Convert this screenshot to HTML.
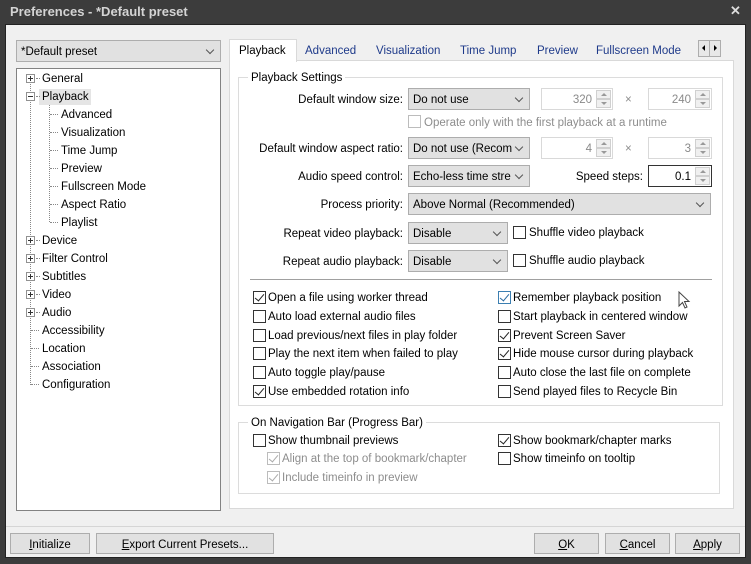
<!DOCTYPE html>
<html><head><meta charset="utf-8"><style>
*{box-sizing:border-box;margin:0;padding:0}
body{width:751px;height:564px;background:#3c3c3c;font-family:"Liberation Sans",sans-serif;font-size:11.5px;color:#000;position:relative;overflow:hidden}
.a{position:absolute;white-space:nowrap}
.win{position:absolute;left:5px;top:24px;width:741px;height:534px;background:#f0f0f0;border:1px solid #222}
.t{position:absolute;white-space:nowrap;line-height:14px;margin-top:1px}
.combo{position:absolute;background:#e1e1e1;border:1px solid #adadad;height:22px;padding:4px 4px 2px;line-height:14px;white-space:nowrap;overflow:hidden}
.combo:after{content:"";position:absolute;right:7px;top:6px;width:5px;height:5px;border-right:1px solid #555;border-bottom:1px solid #555;transform:rotate(45deg)}
.spin{position:absolute;background:#fff;border:1px solid #d9d9d9;height:22px;color:#8a8a8a;text-align:right;padding:4px 20px 0 0;line-height:14px}
.spin i{position:absolute;right:1px;width:15px;height:9px;background:#f0f0f0;border:1px solid #d0d0d0}
.spin i.u{top:1px}.spin i.d{top:10px}
.spin i:after{content:"";position:absolute;left:4px;border-left:3px solid transparent;border-right:3px solid transparent}
.spin i.u:after{top:2px;border-bottom:3px solid #999}
.spin i.d:after{top:2px;border-top:3px solid #999}
.cb{position:absolute;width:13px;height:13px;border:1px solid #333;background:#fff}
.cb.on:after{content:"";position:absolute;left:3px;top:0px;width:4px;height:8px;border-right:1.5px solid #222;border-bottom:1.5px solid #222;transform:rotate(40deg)}
.cb.dis{border-color:#bcbcbc}
.cb.dis:after{border-color:#aaa!important}
.cb.blue{border-color:#3c7fb1}
.cb.blue:after{border-color:#2a6aa0!important}
.btn{position:absolute;height:21px;border:1px solid #adadad;background:#e1e1e1;text-align:center;line-height:20px;padding-top:1px}
.btn u{text-decoration:underline}
.pm{position:absolute;width:9px;height:9px;border:1px solid #919191;background:#fff}
.pm:before{content:"";position:absolute;left:1px;top:3px;width:5px;height:1px;background:#333}
.pm.p:after{content:"";position:absolute;left:3px;top:1px;width:1px;height:5px;background:#333}
.dv{position:absolute;border-left:1px dotted #888}
.dh{position:absolute;border-top:1px dotted #888}
.grp{position:absolute;border:1px solid #dcdcdc}
.lbl{position:absolute;text-align:right;line-height:14px;white-space:nowrap;margin-top:1px}
.gray{color:#8d8d8d}
</style></head><body>
<div class="a" style="left:10px;top:4px;color:#d4d4d4;font-weight:bold;font-size:13px">Preferences - *Default preset</div>
<div class="a" style="left:730px;top:3px;color:#ddd;font-weight:bold;font-size:13px">✕</div>
<div class="win"></div>
<div class="combo" style="left:16px;top:40px;width:205px">*Default preset</div>
<div class="a" style="left:16px;top:68px;width:205px;height:443px;background:#fff;border:1px solid #828282"></div>
<div class="dv" style="left:30px;top:80px;height:305px"></div>
<div class="dv" style="left:49px;top:104px;height:118px"></div>
<div class="a" style="left:39px;top:89px;width:52px;height:16px;background:#e5e5e5"></div>
<div class="pm p" style="left:26px;top:74px"></div><div class="dh" style="left:36px;top:78px;width:4px"></div><div class="t" style="left:42px;top:71px">General</div>
<div class="pm" style="left:26px;top:92px"></div><div class="dh" style="left:36px;top:96px;width:4px"></div><div class="t" style="left:42px;top:89px">Playback</div>
<div class="dh" style="left:50px;top:114px;width:8px"></div><div class="t" style="left:61px;top:107px">Advanced</div>
<div class="dh" style="left:50px;top:132px;width:8px"></div><div class="t" style="left:61px;top:125px">Visualization</div>
<div class="dh" style="left:50px;top:150px;width:8px"></div><div class="t" style="left:61px;top:143px">Time Jump</div>
<div class="dh" style="left:50px;top:168px;width:8px"></div><div class="t" style="left:61px;top:161px">Preview</div>
<div class="dh" style="left:50px;top:186px;width:8px"></div><div class="t" style="left:61px;top:179px">Fullscreen Mode</div>
<div class="dh" style="left:50px;top:204px;width:8px"></div><div class="t" style="left:61px;top:197px">Aspect Ratio</div>
<div class="dh" style="left:50px;top:222px;width:8px"></div><div class="t" style="left:61px;top:215px">Playlist</div>
<div class="pm p" style="left:26px;top:236px"></div><div class="dh" style="left:36px;top:240px;width:4px"></div><div class="t" style="left:42px;top:233px">Device</div>
<div class="pm p" style="left:26px;top:254px"></div><div class="dh" style="left:36px;top:258px;width:4px"></div><div class="t" style="left:42px;top:251px">Filter Control</div>
<div class="pm p" style="left:26px;top:272px"></div><div class="dh" style="left:36px;top:276px;width:4px"></div><div class="t" style="left:42px;top:269px">Subtitles</div>
<div class="pm p" style="left:26px;top:290px"></div><div class="dh" style="left:36px;top:294px;width:4px"></div><div class="t" style="left:42px;top:287px">Video</div>
<div class="pm p" style="left:26px;top:308px"></div><div class="dh" style="left:36px;top:312px;width:4px"></div><div class="t" style="left:42px;top:305px">Audio</div>
<div class="dh" style="left:31px;top:330px;width:8px"></div><div class="t" style="left:42px;top:323px">Accessibility</div>
<div class="dh" style="left:31px;top:348px;width:8px"></div><div class="t" style="left:42px;top:341px">Location</div>
<div class="dh" style="left:31px;top:366px;width:8px"></div><div class="t" style="left:42px;top:359px">Association</div>
<div class="dh" style="left:31px;top:384px;width:8px"></div><div class="t" style="left:42px;top:377px">Configuration</div>
<div class="a" style="left:229px;top:60px;width:505px;height:449px;background:#fff;border:1px solid #d9d9d9"></div>
<div class="a" style="left:229px;top:39px;width:68px;height:23px;background:#fff;border:1px solid #d9d9d9;border-bottom:none;padding:5px 0 0 9px">Playback</div>
<div class="t" style="left:305px;top:43px;color:#1e3a8a">Advanced</div>
<div class="t" style="left:376px;top:43px;color:#1e3a8a">Visualization</div>
<div class="t" style="left:460px;top:43px;color:#1e3a8a">Time Jump</div>
<div class="t" style="left:537px;top:43px;color:#1e3a8a">Preview</div>
<div class="t" style="left:596px;top:43px;color:#1e3a8a">Fullscreen Mode</div>
<div class="a" style="left:698px;top:40px;width:23px;height:17px;background:#e8e8e8;border:1px solid #adadad"></div>
<div class="a" style="left:709px;top:41px;width:1px;height:15px;background:#adadad"></div>
<div class="a" style="left:702px;top:45px;border-right:3px solid #000;border-top:3px solid transparent;border-bottom:3px solid transparent"></div>
<div class="a" style="left:714px;top:45px;border-left:3px solid #000;border-top:3px solid transparent;border-bottom:3px solid transparent"></div>
<div class="grp" style="left:238px;top:77px;width:485px;height:329px"></div>
<div class="t" style="left:248px;top:70px;background:#fff;padding:0 3px">Playback Settings</div>
<div class="lbl" style="left:240px;width:163px;top:92px">Default window size:</div>
<div class="combo" style="left:408px;top:88px;width:122px">Do not use</div>
<div class="spin" style="left:541px;top:88px;width:72px">320<i class="u"></i><i class="d"></i></div>
<div class="t gray" style="left:625px;top:92px">×</div>
<div class="spin" style="left:648px;top:88px;width:64px">240<i class="u"></i><i class="d"></i></div>
<div class="cb dis" style="left:408px;top:115px"></div><div class="t gray" style="left:424px;top:115px">Operate only with the first playback at a runtime</div>
<div class="lbl" style="left:240px;width:163px;top:141px">Default window aspect ratio:</div>
<div class="combo" style="left:408px;top:137px;width:122px;padding-right:20px">Do not use (Recom</div>
<div class="spin" style="left:541px;top:137px;width:72px">4<i class="u"></i><i class="d"></i></div>
<div class="t gray" style="left:625px;top:141px">×</div>
<div class="spin" style="left:648px;top:137px;width:64px">3<i class="u"></i><i class="d"></i></div>
<div class="lbl" style="left:240px;width:163px;top:169px">Audio speed control:</div>
<div class="combo" style="left:408px;top:165px;width:122px;padding-right:20px">Echo-less time stre</div>
<div class="lbl" style="left:560px;width:83px;top:169px">Speed steps:</div>
<div class="spin" style="left:648px;top:165px;width:64px;border-color:#333;color:#000">0.1<i class="u"></i><i class="d"></i></div>
<div class="lbl" style="left:240px;width:163px;top:197px">Process priority:</div>
<div class="combo" style="left:408px;top:193px;width:303px">Above Normal (Recommended)</div>
<div class="lbl" style="left:240px;width:163px;top:226px">Repeat video playback:</div>
<div class="combo" style="left:408px;top:222px;width:100px">Disable</div>
<div class="cb" style="left:513px;top:226px"></div><div class="t" style="left:529px;top:225px">Shuffle video playback</div>
<div class="lbl" style="left:240px;width:163px;top:254px">Repeat audio playback:</div>
<div class="combo" style="left:408px;top:250px;width:100px">Disable</div>
<div class="cb" style="left:513px;top:254px"></div><div class="t" style="left:529px;top:253px">Shuffle audio playback</div>
<div class="a" style="left:250px;top:279px;width:462px;height:1px;background:#a0a0a0"></div>
<div class="cb on" style="left:253px;top:291px"></div><div class="t" style="left:268px;top:290px">Open a file using worker thread</div>
<div class="cb" style="left:253px;top:310px"></div><div class="t" style="left:268px;top:309px">Auto load external audio files</div>
<div class="cb" style="left:253px;top:329px"></div><div class="t" style="left:268px;top:328px">Load previous/next files in play folder</div>
<div class="cb" style="left:253px;top:347px"></div><div class="t" style="left:268px;top:346px">Play the next item when failed to play</div>
<div class="cb" style="left:253px;top:366px"></div><div class="t" style="left:268px;top:365px">Auto toggle play/pause</div>
<div class="cb on" style="left:253px;top:385px"></div><div class="t" style="left:268px;top:384px">Use embedded rotation info</div>
<div class="cb on blue" style="left:498px;top:291px"></div><div class="t" style="left:513px;top:290px">Remember playback position</div>
<div class="cb" style="left:498px;top:310px"></div><div class="t" style="left:513px;top:309px">Start playback in centered window</div>
<div class="cb on" style="left:498px;top:329px"></div><div class="t" style="left:513px;top:328px">Prevent Screen Saver</div>
<div class="cb on" style="left:498px;top:347px"></div><div class="t" style="left:513px;top:346px">Hide mouse cursor during playback</div>
<div class="cb" style="left:498px;top:366px"></div><div class="t" style="left:513px;top:365px">Auto close the last file on complete</div>
<div class="cb" style="left:498px;top:385px"></div><div class="t" style="left:513px;top:384px">Send played files to Recycle Bin</div>
<svg class="a" style="left:678px;top:291px" width="14" height="20" viewBox="0 0 14 20"><path d="M1 1 L1 15 L4.5 11.5 L7 17 L9 16 L6.5 10.5 L11 10.5 Z" fill="#fff" stroke="#444" stroke-width="1"/></svg>
<div class="grp" style="left:238px;top:422px;width:482px;height:72px"></div>
<div class="t" style="left:248px;top:415px;background:#fff;padding:0 3px">On Navigation Bar (Progress Bar)</div>
<div class="cb" style="left:253px;top:434px"></div><div class="t" style="left:268px;top:433px">Show thumbnail previews</div>
<div class="cb on dis" style="left:267px;top:452px"></div><div class="t gray" style="left:282px;top:451px">Align at the top of bookmark/chapter</div>
<div class="cb on dis" style="left:267px;top:471px"></div><div class="t gray" style="left:282px;top:470px">Include timeinfo in preview</div>
<div class="cb on" style="left:498px;top:434px"></div><div class="t" style="left:513px;top:433px">Show bookmark/chapter marks</div>
<div class="cb" style="left:498px;top:452px"></div><div class="t" style="left:513px;top:451px">Show timeinfo on tooltip</div>
<div class="a" style="left:6px;top:526px;width:739px;height:1px;background:#d5d5d5"></div>
<div class="btn" style="left:10px;top:533px;width:80px"><u>I</u>nitialize</div>
<div class="btn" style="left:96px;top:533px;width:178px"><u>E</u>xport Current Presets...</div>
<div class="btn" style="left:534px;top:533px;width:65px"><u>O</u>K</div>
<div class="btn" style="left:605px;top:533px;width:65px"><u>C</u>ancel</div>
<div class="btn" style="left:675px;top:533px;width:65px"><u>A</u>pply</div>
</body></html>
